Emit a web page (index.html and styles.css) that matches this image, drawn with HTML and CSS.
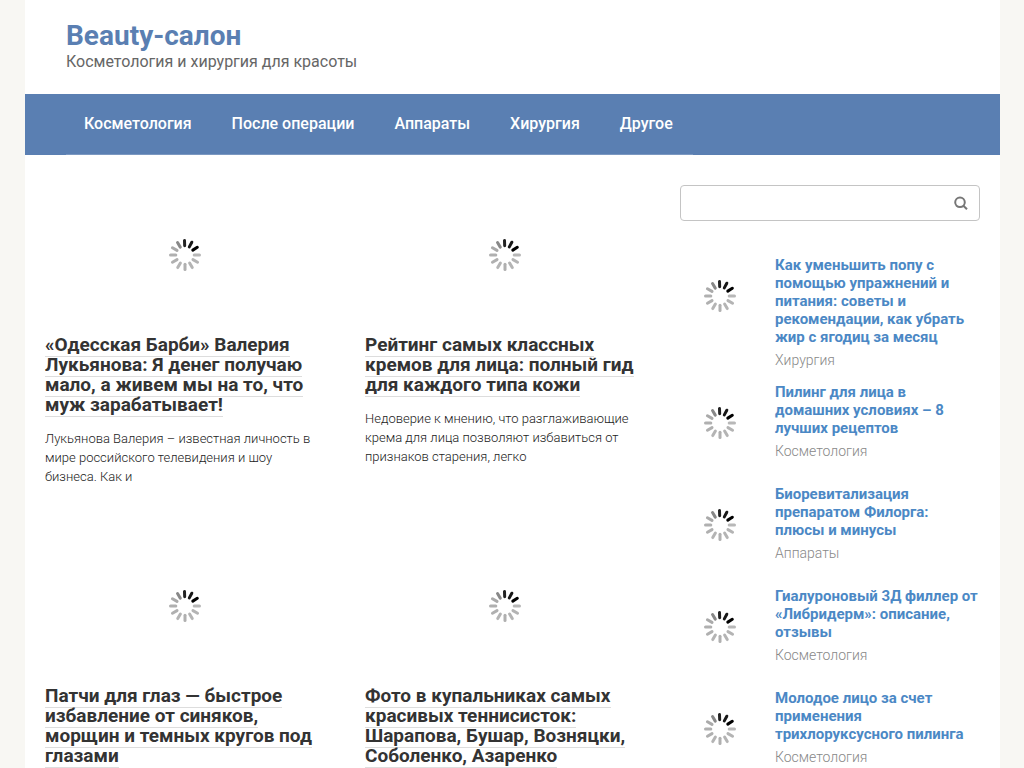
FILE: index.html
```html
<!DOCTYPE html>
<html lang="ru">
<head>
<meta charset="utf-8">
<meta name="viewport" content="width=device-width, initial-scale=1">
<title>Beauty-салон</title>
<link rel="stylesheet" href="styles.css">
</head>
<body>
<svg class="sprite" aria-hidden="true">
  <symbol id="spinner" viewBox="-16 -16 32 32">
    <g stroke-width="3" stroke-linecap="round">
      <path d="M0-9.200V-14.500" stroke="#222" transform="rotate(-2)"/>
      <path d="M0-9.200V-14.500" stroke="#181818" transform="rotate(28)"/>
      <path d="M0-9.200V-14.500" stroke="#000" transform="rotate(58)"/>
      <path d="M0-9.200V-14.500" stroke="#b8b8b8" transform="rotate(90)"/>
      <path d="M0-9.200V-14.500" stroke="#b4b4b4" transform="rotate(120)"/>
      <path d="M0-9.200V-14.500" stroke="#b4b4b4" transform="rotate(150)"/>
      <path d="M0-9.200V-14.500" stroke="#b0b0b0" transform="rotate(180)"/>
      <path d="M0-9.200V-14.500" stroke="#b4b4b4" transform="rotate(210)"/>
      <path d="M0-9.200V-14.500" stroke="#b0b0b0" transform="rotate(240)"/>
      <path d="M0-9.200V-14.500" stroke="#b0b0b0" transform="rotate(270)"/>
      <path d="M0-9.200V-14.500" stroke="#aaa" transform="rotate(300)"/>
      <path d="M0-9.200V-14.500" stroke="#888" transform="rotate(329)"/>
    </g>
  </symbol>
</svg>
<div class="site">
  <header class="header">
    <a class="brand" href="#">Beauty-салон</a>
    <p class="tagline">Косметология и хирургия для красоты</p>
  </header>
  <nav class="nav">
    <ul class="menu">
      <li><a href="#">Косметология</a></li>
      <li><a href="#">После операции</a></li>
      <li><a href="#">Аппараты</a></li>
      <li><a href="#">Хирургия</a></li>
      <li><a href="#">Другое</a></li>
    </ul>
  </nav>
  <div class="content">
    <main class="posts">
      <article class="post">
        <div class="post-image"><svg class="spinner"><use href="#spinner"/></svg></div>
        <h2 class="post-title"><a href="#">«Одесская Барби» Валерия Лукьянова: Я денег получаю мало, а живем мы на то, что муж зарабатывает!</a></h2>
        <p class="excerpt">Лукьянова Валерия – известная личность в мире российского телевидения и шоу бизнеса. Как и</p>
      </article>
      <article class="post">
        <div class="post-image"><svg class="spinner"><use href="#spinner"/></svg></div>
        <h2 class="post-title"><a href="#">Рейтинг самых классных кремов для лица: полный гид для каждого типа кожи</a></h2>
        <p class="excerpt">Недоверие к мнению, что разглаживающие крема для лица позволяют избавиться от признаков старения, легко</p>
      </article>
      <article class="post">
        <div class="post-image"><svg class="spinner"><use href="#spinner"/></svg></div>
        <h2 class="post-title"><a href="#">Патчи для глаз — быстрое избавление от синяков, морщин и темных кругов под глазами</a></h2>
      </article>
      <article class="post">
        <div class="post-image"><svg class="spinner"><use href="#spinner"/></svg></div>
        <h2 class="post-title"><a href="#">Фото в купальниках самых красивых теннисисток: Шарапова, Бушар, Возняцки, Соболенко, Азаренко</a></h2>
      </article>
    </main>
    <aside class="sidebar">
      <form class="search">
        <input class="search-field" type="text" aria-label="Поиск">
        <button class="search-button" type="button" aria-label="Найти">
          <svg class="search-icon" viewBox="0 0 14 14" fill="none" stroke="#777" stroke-width="2"><circle cx="6" cy="6.300" r="4.800"/><path d="M9.400 9.700L13 13.300"/></svg>
        </button>
      </form>
      <article class="item">
        <div class="thumb"><svg class="spinner"><use href="#spinner"/></svg></div>
        <div class="item-body"><a class="item-title" href="#">Как уменьшить попу с помощью упражнений и питания: советы и рекомендации, как убрать жир с ягодиц за месяц</a><span class="category">Хирургия</span></div>
      </article>
      <article class="item">
        <div class="thumb"><svg class="spinner"><use href="#spinner"/></svg></div>
        <div class="item-body"><a class="item-title" href="#">Пилинг для лица в домашних условиях – 8 лучших рецептов</a><span class="category">Косметология</span></div>
      </article>
      <article class="item">
        <div class="thumb"><svg class="spinner"><use href="#spinner"/></svg></div>
        <div class="item-body"><a class="item-title" href="#">Биоревитализация препаратом Филорга: плюсы и минусы</a><span class="category">Аппараты</span></div>
      </article>
      <article class="item">
        <div class="thumb"><svg class="spinner"><use href="#spinner"/></svg></div>
        <div class="item-body"><a class="item-title" href="#">Гиалуроновый 3Д филлер от «Либридерм»: описание, отзывы</a><span class="category">Косметология</span></div>
      </article>
      <article class="item">
        <div class="thumb"><svg class="spinner"><use href="#spinner"/></svg></div>
        <div class="item-body"><a class="item-title" href="#">Молодое лицо за счет применения трихлоруксусного пилинга</a><span class="category">Косметология</span></div>
      </article>
    </aside>
  </div>
</div>
</body>
</html>
```
FILE: styles.css
```css
* {
  box-sizing: border-box;
}

html {
  scrollbar-width: none;
}

body {
  margin: 0;
  padding: 0 24px 0 25px;
  background: #f8f7f3;
  color: #333;
  font-family: Roboto, "Liberation Sans", sans-serif;
}

a {
  color: inherit;
  text-decoration: none;
}

.sprite {
  display: none;
}

.site {
  max-width: 1200px;
  margin: 0 auto;
  background: #fff;
}

.header {
  padding: 20px 41px 22px;
}

.brand {
  display: block;
  color: #5a7fb2;
  font-size: 28px;
  font-weight: 700;
  line-height: 32px;
}

.tagline {
  margin: 0;
  color: #666;
  font-size: 16px;
  line-height: 20px;
}

.nav {
  display: flex;
  padding: 0 41px;
  background: #5a7fb2;
}

.menu {
  display: flex;
  margin: 0;
  padding: 0;
  border-bottom: 1px solid #7b98c1;
  list-style: none;
}

.menu a {
  display: block;
  padding: 20px;
  color: #fff;
  font-size: 16px;
  font-weight: 500;
  line-height: 20px;
}

.menu li:first-child a {
  padding-left: 18px;
}

.content {
  display: flex;
  gap: 35px;
  padding: 30px 20px;
}

.posts {
  display: grid;
  flex: 1;
  grid-template-columns: 1fr 1fr;
  gap: 50px 40px;
  align-content: start;
}

.post-image {
  display: flex;
  align-items: center;
  justify-content: center;
  height: 140px;
  margin-bottom: 10px;
}

.spinner {
  width: 32px;
  height: 32px;
}

.post-title {
  margin: 0;
  font-size: 19px;
  font-weight: 700;
  line-height: 20px;
}

.post-title a {
  border-bottom: 1px solid #ddd;
}

.excerpt {
  margin: 14px 0 0;
  color: #222;
  font-size: 13px;
  font-weight: 300;
  line-height: 19px;
}

.sidebar {
  width: 300px;
}

.search {
  display: flex;
  height: 36px;
  margin-bottom: 35px;
  border: 1px solid #c4c4c4;
  border-radius: 4px;
}

.search-field {
  flex: 1;
  min-width: 0;
  padding: 0 12px;
  border: 0;
  background: transparent;
  font: inherit;
}

.search-button {
  display: flex;
  align-items: center;
  justify-content: center;
  width: 36px;
  padding: 0;
  border: 0;
  background: transparent;
}

.search-icon {
  width: 14px;
  height: 14px;
}

.item {
  display: flex;
  gap: 15px;
  min-height: 87px;
  margin-bottom: 15px;
}

.thumb {
  display: flex;
  flex: none;
  align-items: center;
  justify-content: center;
  width: 80px;
  height: 80px;
}

.item-body {
  flex: 1;
}

.item-title {
  display: block;
  margin-bottom: 6px;
  color: #4b88c5;
  font-size: 15px;
  font-weight: 700;
  line-height: 18px;
}

.category {
  display: block;
  color: #888;
  font-size: 14px;
  font-weight: 300;
  line-height: 16px;
}
```
